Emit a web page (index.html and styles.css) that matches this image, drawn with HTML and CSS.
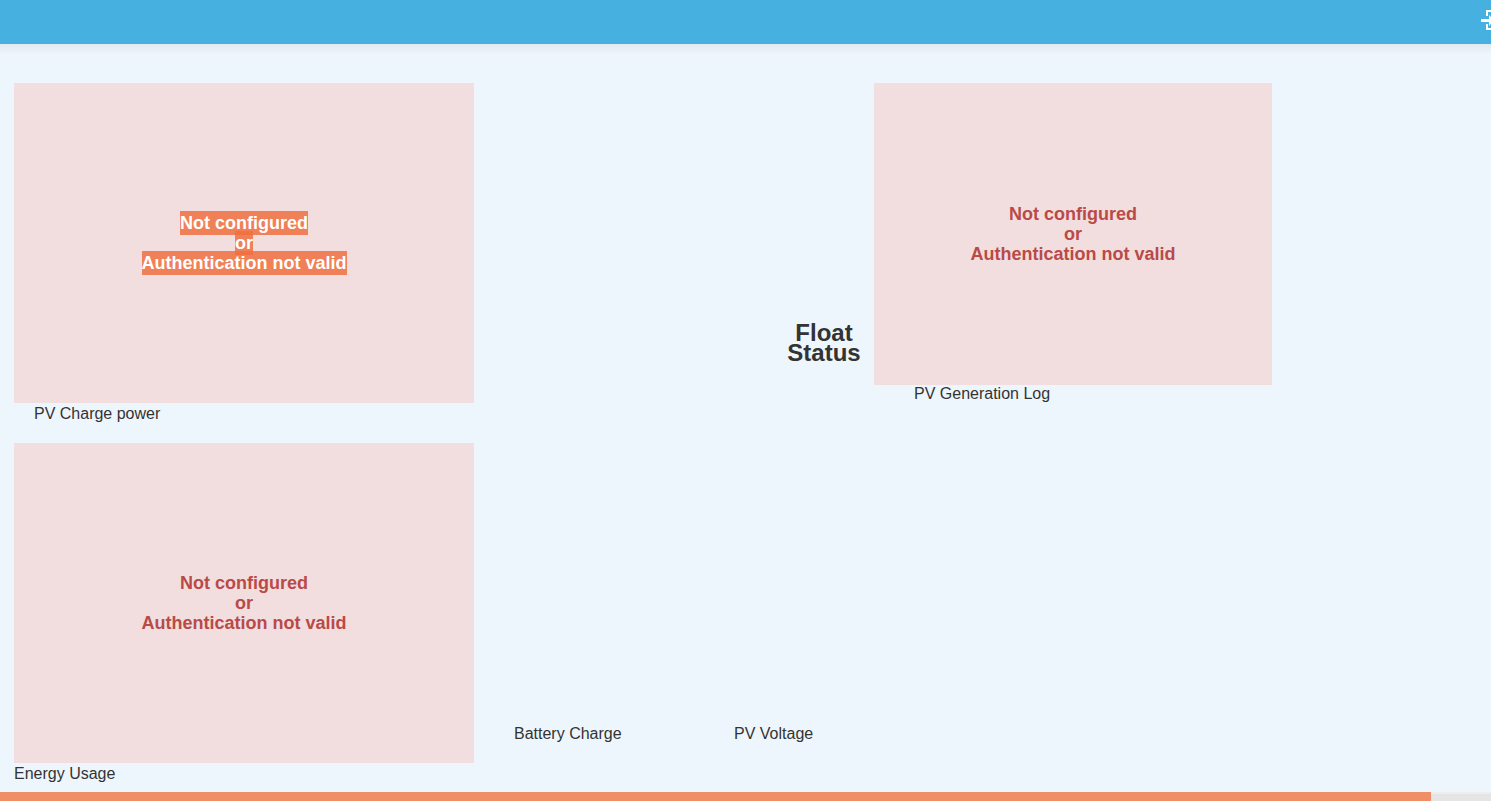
FILE: index.html
```html
<!DOCTYPE html>
<html lang="en">
<head>
    <meta charset="UTF-8">
    <meta name="viewport" content="width=device-width, initial-scale=1.0">
    <title>PV Dashboard</title>
    <link rel="stylesheet" href="styles.css">
</head>
<body>
    <header class="topbar">
        <button class="login" type="button" aria-label="Sign in">
            <svg width="24" height="24" viewBox="0 0 24 24" fill="#fff">
                <path d="M7 2h14v20H7v-6h2v4h10V4H9v4H7z"/>
                <path d="M2 11h8V7l5 5-5 6v-4H2z"/>
            </svg>
        </button>
    </header>

    <main class="dashboard">
        <section class="column">
            <div class="panel">
                <p class="message"><mark>Not configured</mark><br><mark>or</mark><br><mark>Authentication not valid</mark></p>
            </div>
            <p class="label label-charge">PV Charge power</p>
            <div class="panel">
                <p class="message">Not configured<br>or<br>Authentication not valid</p>
            </div>
            <p class="label">Energy Usage</p>
        </section>

        <section class="gauges">
            <h2 class="status">Float Status</h2>
            <p class="label">Battery Charge</p>
            <p class="label">PV Voltage</p>
        </section>

        <section class="column">
            <div class="panel panel-log">
                <p class="message">Not configured<br>or<br>Authentication not valid</p>
            </div>
            <p class="label label-log">PV Generation Log</p>
        </section>
    </main>

    <div class="scroll-track">
        <div class="scroll-thumb"></div>
    </div>
</body>
</html>
```
FILE: styles.css
```css
* {
    box-sizing: border-box;
}
body {
    display: flex;
    flex-direction: column;
    min-height: 100vh;
    margin: 0;
    background-color: #eef6fd;
    color: #333;
    font-family: "Liberation Sans", Arial, sans-serif;
    font-size: 16px;
    line-height: 20px;
}
p, h2 {
    margin: 0;
}

.topbar {
    display: flex;
    justify-content: flex-end;
    height: 44px;
    padding-top: 8px;
    overflow: hidden;
    flex-shrink: 0;
    background-color: #46b1e1;
}
.login {
    width: 24px;
    height: 24px;
    margin-right: -12px;
    padding: 0;
    border: none;
    background: none;
    cursor: pointer;
}
.login svg {
    display: block;
}

.dashboard {
    display: grid;
    grid-template-columns: 460fr 400fr 398fr 205fr;
    flex: 1;
    padding: 39px 14px 7px;
    /* shade under the top bar */
    background: linear-gradient(#e2e9ef, #eef6fd 10px);
}
.panel {
    display: flex;
    align-items: center;
    justify-content: center;
    height: 320px;
    background-color: #f2dede;
}
.panel-log {
    height: 302px;
}
.message {
    color: #b94a48;
    font-size: 18px;
    font-weight: bold;
    text-align: center;
}
.message mark {
    padding: 2px 0;
    background-color: rgba(240, 112, 64, 0.85);
    color: #fff;
}
.label {
    line-height: 22px;
}
.label-charge {
    margin-bottom: 18px;
    padding-left: 20px;
}
.label-log {
    padding-left: 40px;
    line-height: 18px;
}

.gauges {
    display: grid;
    grid-template-columns: 220px 1fr;
    grid-template-rows: 1fr 22px;
    padding: 240px 0 40px 40px;
}
.status {
    grid-column: 2;
    justify-self: end;
    width: 100px;
    font-size: 24px;
    line-height: 20px;
    text-align: center;
}
.gauges .label {
    grid-row: 2;
}

.scroll-track {
    height: 9px;
    flex-shrink: 0;
    border-top: 2px solid #eee;
    background-color: #e5e5e5;
}
.scroll-thumb {
    width: 96%;
    height: 9px;
    margin-top: -2px;
    background-color: #f08e66;
}
```
